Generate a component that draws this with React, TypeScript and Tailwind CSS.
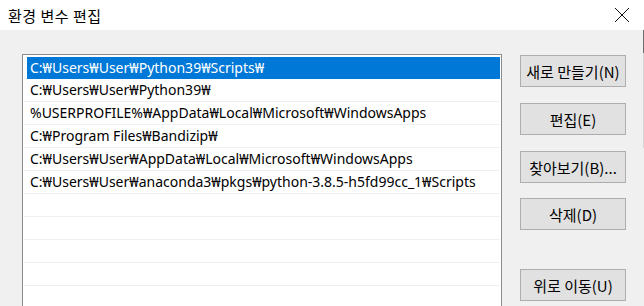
import React from 'react';

const paths = [
  'C:₩Users₩User₩Python39₩Scripts₩',
  'C:₩Users₩User₩Python39₩',
  '%USERPROFILE%₩AppData₩Local₩Microsoft₩WindowsApps',
  'C:₩Program Files₩Bandizip₩',
  'C:₩Users₩User₩AppData₩Local₩Microsoft₩WindowsApps',
  'C:₩Users₩User₩anaconda3₩pkgs₩python-3.8.5-h5fd99cc_1₩Scripts',
  '',
  '',
  '',
  '',
  '',
];

const buttons = [
  { label: '새로 만들기(N)', mt: 'mt-[25px]' },
  { label: '편집(E)', mt: 'mt-[16px]' },
  { label: '찾아보기(B)...', mt: 'mt-[16px]' },
  { label: '삭제(D)', mt: 'mt-[15px]' },
  { label: '위로 이동(U)', mt: 'mt-[39px]' },
];

const App = () => {
  return (
    <div className="w-[644px] h-[306px] overflow-hidden flex flex-col bg-[#f0f0f0] text-black font-['Noto_Sans','Noto_Sans_CJK_KR',sans-serif]">
      {/* title bar */}
      <div className="h-[30px] shrink-0 bg-white flex items-center pl-[8px] pr-[14px]">
        <span className="text-[15px] leading-none font-['Noto_Sans_CJK_KR',sans-serif] tracking-[0.5px]">환경 변수 편집</span>
        <svg className="ml-auto" width="16" height="16" viewBox="0 0 16 16">
          <path d="M1 1 L15 15 M15 1 L1 15" stroke="#111" strokeWidth="1" fill="none" />
        </svg>
      </div>

      <div className="flex flex-1 min-h-0">
        {/* path list */}
        <div className="ml-[22px] mt-[24px] w-[480px] bg-white border border-b-0 border-[#8c8c8c] pt-[1px] px-[1px]">
          {paths.map((p, i) => (
            <div key={i} className="h-[23px] border-b border-[#f0f0f0] flex">
              <div
                className={
                  i === 0
                    ? 'flex-1 ml-[3px] mt-[1px] -mb-[1px] bg-[#0078d7] text-white flex items-center pl-[3px]'
                    : 'flex-1 ml-[3px] flex items-center pl-[3px]'
                }
              >
                <span className="text-[14px] leading-none whitespace-nowrap">{p}</span>
              </div>
            </div>
          ))}
        </div>

        {/* buttons */}
        <div className="ml-[18px] flex flex-col">
          {buttons.map((b) => (
            <button
              key={b.label}
              className={`${b.mt} w-[106px] h-[32px] bg-[#e1e1e1] border border-[#adadad] text-[15px] leading-none font-['Noto_Sans_CJK_KR',sans-serif] text-black`}
            >
              {b.label}
            </button>
          ))}
        </div>

        {/* edge of the window behind */}
        <div className="ml-auto w-[1px] flex flex-col">
          <div className="h-[23px] bg-[#6d6d6d]" />
          <div className="h-[95px] bg-[#d4d4d4]" />
        </div>
      </div>
    </div>
  );
};

export default App;
